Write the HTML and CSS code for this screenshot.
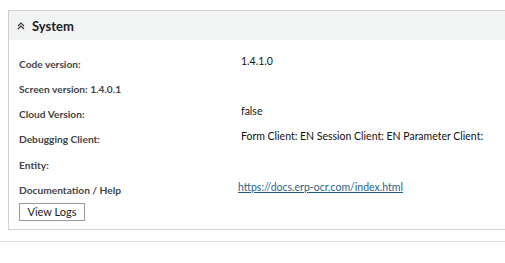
FILE: index.html
```html
<!DOCTYPE html>
<html>
<head>
<meta charset="utf-8">
<link rel="stylesheet" href="styles.css">
</head>
<body>
<div class="page">
  <section class="panel">
    <header class="panel-head">
      <svg class="chev" width="8" height="8" viewBox="0 0 8 8"><path d="M1 4 L4 1 L7 4 M1 7 L4 4 L7 7" fill="none" stroke="#333" stroke-width="1.1"/></svg>
      <span class="title">System</span>
    </header>
    <div class="panel-body">
      <div class="grid">
        <div class="label">Code version:</div><div class="value">1.4.1.0</div>
        <div class="label">Screen version: 1.4.0.1</div><div class="value"></div>
        <div class="label">Cloud Version:</div><div class="value">false</div>
        <div class="label">Debugging Client:</div><div class="value">Form Client: EN Session Client: EN Parameter Client:</div>
        <div class="label">Entity:</div><div class="value"></div>
        <div class="label">Documentation / Help</div><div class="value"><a class="link" href="#">https://docs.erp-ocr.com/index.html</a></div>
      </div>
      <button class="btn">View Logs</button>
    </div>
  </section>
  <div class="sep"></div>
</div>
</body>
</html>
```
FILE: styles.css
```css
html, body { margin: 0; padding: 0; background: #fff; }
body { font-family: Lato, "Open Sans", sans-serif; color: #222; overflow: hidden; }
.page { padding: 10px 0 0 8px; }
.panel {
  border: 1px solid #cfd1d1;
  border-right: none;
}
.panel-head {
  background: #f2f4f3;
  height: 29px;
  display: flex;
  align-items: center;
  padding-left: 8px;
  gap: 7px;
}
.chev { display: block; }
.title { font-weight: 700; font-size: 13px; color: #222; }
.panel-body { padding: 12px 10px 8px 10px; }
.grid {
  display: grid;
  grid-template-columns: 222px 1fr;
  grid-auto-rows: 25.3px;
}
.label { font-size: 10.2px; font-weight: 700; color: #444; padding-top: 5.5px; white-space: nowrap; }
.value { font-size: 10.5px; color: #111; padding-top: 2.5px; white-space: nowrap; }
.link { color: #1f5f8b; text-decoration: underline; margin-left: -3px; }
.btn {
  display: block;
  margin-top: -1px;
  font-family: Lato, sans-serif;
  font-size: 11px;
  color: #222;
  background: #fff;
  border: 1px solid #9a9a9a;
  border-radius: 0;
  height: 18px;
  width: 66px;
  padding: 0;
}
.sep { border-top: 1px solid #d8d8d8; margin: 11px 0 0 -8px; }
```
